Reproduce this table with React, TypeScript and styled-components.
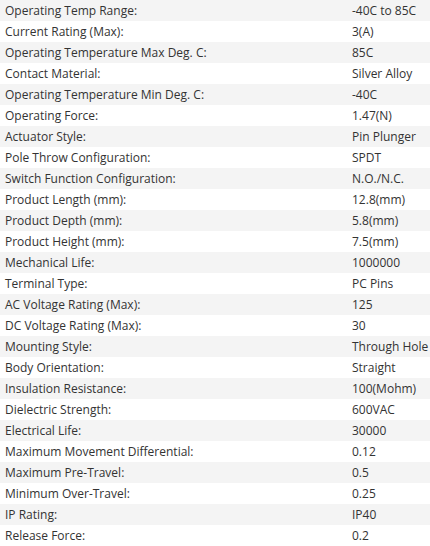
import React from 'react';
import styled, { createGlobalStyle } from 'styled-components';

const specs: [string, string][] = [
  ['Operating Temp Range:', '-40C to 85C'],
  ['Current Rating (Max):', '3(A)'],
  ['Operating Temperature Max Deg. C:', '85C'],
  ['Contact Material:', 'Silver Alloy'],
  ['Operating Temperature Min Deg. C:', '-40C'],
  ['Operating Force:', '1.47(N)'],
  ['Actuator Style:', 'Pin Plunger'],
  ['Pole Throw Configuration:', 'SPDT'],
  ['Switch Function Configuration:', 'N.O./N.C.'],
  ['Product Length (mm):', '12.8(mm)'],
  ['Product Depth (mm):', '5.8(mm)'],
  ['Product Height (mm):', '7.5(mm)'],
  ['Mechanical Life:', '1000000'],
  ['Terminal Type:', 'PC Pins'],
  ['AC Voltage Rating (Max):', '125'],
  ['DC Voltage Rating (Max):', '30'],
  ['Mounting Style:', 'Through Hole'],
  ['Body Orientation:', 'Straight'],
  ['Insulation Resistance:', '100(Mohm)'],
  ['Dielectric Strength:', '600VAC'],
  ['Electrical Life:', '30000'],
  ['Maximum Movement Differential:', '0.12'],
  ['Maximum Pre-Travel:', '0.5'],
  ['Minimum Over-Travel:', '0.25'],
  ['IP Rating:', 'IP40'],
  ['Release Force:', '0.2'],
];

const GlobalStyle = createGlobalStyle`
  body {
    margin: 0;
    background: #ffffff;
    font-family: "Open Sans", "Noto Sans", sans-serif;
  }
`;

const SpecTable = styled.div`
  width: 430px;
  display: flex;
  flex-direction: column;
`;

const SpecRow = styled.div<{ $striped: boolean }>`
  display: grid;
  grid-template-columns: 347px 1fr;
  height: 21px;
  background: ${(p) => (p.$striped ? '#f4f4f4' : '#ffffff')};
`;

const Cell = styled.div`
  padding: 0 5px;
  font-size: 12px;
  line-height: 21px;
  color: #333333;
  white-space: nowrap;
`;

export default function App() {
  return (
    <>
      <GlobalStyle />
      <SpecTable>
        {specs.map(([label, value], idx) => (
          <SpecRow key={label} $striped={idx % 2 === 0}>
            <Cell>{label}</Cell>
            <Cell>{value}</Cell>
          </SpecRow>
        ))}
      </SpecTable>
    </>
  );
}
